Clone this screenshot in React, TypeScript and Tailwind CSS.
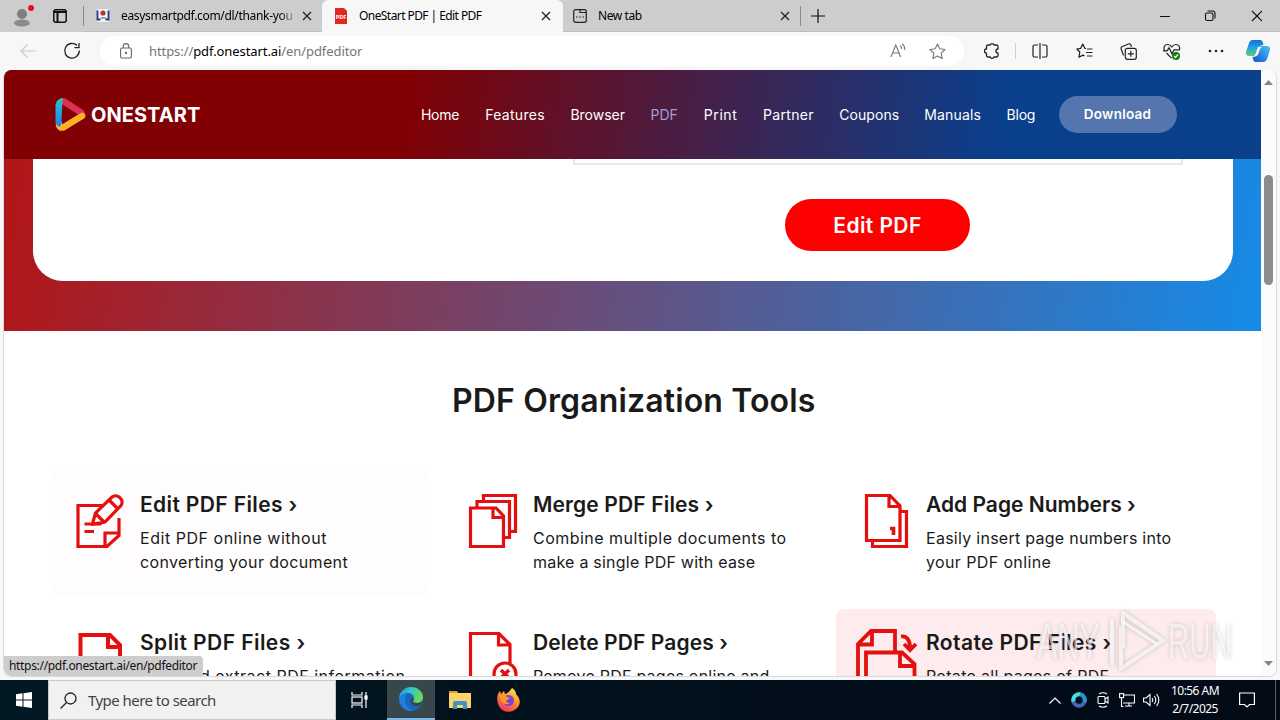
import React from 'react';
import type { ReactNode } from 'react';

const navLinks = [
  { label: 'Home', style: 'w-[39px] tracking-[-0.3px]' },
  { label: 'Features', style: 'w-[60px] tracking-[0.3px]' },
  { label: 'Browser', style: 'w-[55px]' },
  { label: 'PDF', style: 'w-[28px] text-[#a79bd6]' },
  { label: 'Print', style: 'w-[34px] tracking-[0.6px]' },
  { label: 'Partner', style: 'w-[51px] tracking-[0.35px]' },
  { label: 'Coupons', style: 'w-[60px] tracking-[0.1px]' },
  { label: 'Manuals', style: 'w-[57px] tracking-[0.15px]' },
  { label: 'Blog', style: 'w-[29px] tracking-[-0.2px]' },
];

function CloseIcon() {
  return (
    <svg width="10" height="10" viewBox="0 0 10 10" stroke="#222" strokeWidth="1.3">
      <path d="M1 1l8 8M9 1l-8 8" />
    </svg>
  );
}

function TabBar() {
  return (
    <div className="flex h-8 shrink-0 bg-[#cdcdcd] text-xs text-black">
      <div className="flex w-[83px] items-center">
        <svg className="ml-3" width="24" height="26" viewBox="0 0 24 26">
          <circle cx="10" cy="11" r="5" fill="#807d7a" />
          <ellipse cx="10" cy="20" rx="8" ry="3.5" fill="#8d8a87" />
          <circle cx="19" cy="5" r="3" fill="#e81123" />
        </svg>
        <svg className="ml-[17px]" width="14" height="14" viewBox="0 0 14 14" fill="none" stroke="#111" strokeWidth="1.5">
          <rect x="0.8" y="0.8" width="12.4" height="12.4" rx="2" />
          <path d="M1 3h12M4.5 3v10" strokeWidth="2" />
        </svg>
      </div>
      <div className="flex w-[239px] items-center border-b border-[#bdbdbd]">
        <div className="h-5 w-px bg-[#8a8a8a]" />
        <svg className="ml-3" width="14" height="14" viewBox="0 0 14 14">
          <rect x="1" y="0" width="12" height="13" fill="#f4f4f8" />
          <path d="M1.500 1.500v9h3M12.500 1.500v9h-3" stroke="#263a86" strokeWidth="1.800" fill="none" />
          <circle cx="7" cy="4" r="2.6" fill="#b8352c" />
          <path d="M5 9h5" stroke="#555" />
        </svg>
        <div className="ml-[11px] w-[176px] bg-linear-to-r from-black from-88% to-[#cdcdcd] bg-clip-text tracking-[-0.32px] whitespace-nowrap text-transparent">
          easysmartpdf.com/dl/thank-you
        </div>
        <div className="ml-[5px]">
          <CloseIcon />
        </div>
      </div>
      <div className="flex w-[241px] items-center rounded-t-md bg-[#f7f7f7]">
        <svg className="ml-3" width="14" height="16" viewBox="0 0 14 16">
          <path d="M1 0h9l3 3v13H1z" fill="#e5261f" />
          <text x="7" y="10.5" textAnchor="middle" fontSize="5.5" fontWeight="bold" fill="#fff">PDF</text>
        </svg>
        <div className="ml-[11px] w-[182px] tracking-[-0.57px] whitespace-nowrap">OneStart PDF | Edit PDF</div>
        <CloseIcon />
      </div>
      <div className="flex w-[238px] items-center border-b border-[#bdbdbd]">
        <svg className="ml-[10px]" width="14" height="14" viewBox="0 0 14 14" fill="none" stroke="#222" strokeWidth="1.2">
          <rect x="0.7" y="0.7" width="12.6" height="12.6" rx="2" />
          <path d="M7 1v2.5h6M3 8h1.5M6.2 8h1.5M9.5 8H11" />
        </svg>
        <div className="ml-[11px] w-[182px] tracking-[-0.4px]">New tab</div>
        <CloseIcon />
        <div className="ml-auto h-5 w-px bg-[#8a8a8a]" />
      </div>
      <div className="flex flex-1 items-center border-b border-[#bdbdbd]">
        <svg className="ml-[10px]" width="14" height="14" viewBox="0 0 14 14" stroke="#111" strokeWidth="1.2">
          <path d="M7 0v14M0 7h14" />
        </svg>
        <svg className="mr-[18px] ml-auto" width="104" height="12" viewBox="0 0 104 12" fill="none" stroke="#111" strokeWidth="1.1">
          <path d="M2 6.5h10M94 1l10 10M104 1L94 11" />
          <rect x="47.5" y="3" width="7.5" height="7.5" rx="1.5" />
          <path d="M49.5 1h5a2.5 2.5 0 0 1 2.5 2.5v5" />
        </svg>
      </div>
    </div>
  );
}

function Toolbar() {
  return (
    <div className="flex h-[38px] shrink-0 items-center bg-[#f7f7f7]">
      <svg className="ml-5" width="17" height="16" viewBox="0 0 17 16" fill="none" stroke="#ccc" strokeWidth="1.2">
        <path d="M16 8H1M7.5 1.5L1 8l6.5 6.5" />
      </svg>
      <svg className="ml-[26px]" width="18" height="18" viewBox="0 0 18 18" fill="none" stroke="#222" strokeWidth="1.3">
        <path d="M16.3 8.5a7.3 7.3 0 1 1-2.2-5M16 1v4.6h-4.6" />
      </svg>
      <div className="ml-[19px] flex h-[30px] w-[864px] items-center rounded-full bg-white">
        <svg className="ml-5" width="12" height="16" viewBox="0 0 12 16" fill="none" stroke="#666" strokeWidth="1.1">
          <rect x="0.6" y="5" width="10.8" height="10" rx="1.5" />
          <path d="M3.3 5V3.3a2.7 2.7 0 0 1 5.4 0V5" />
          <circle cx="6" cy="10" r="0.6" fill="#666" />
        </svg>
        <div className="mt-px ml-[17px] text-[13px] tracking-[-0.08px] text-[#757575]">
          https://<span className="text-black">pdf.onestart.ai</span>/en/pdfeditor
        </div>
        <svg className="ml-auto" width="16" height="16" viewBox="0 0 16 16" fill="none" stroke="#777" strokeWidth="1.1">
          <path d="M1 14L5.8 2l4.8 12M2.7 10h6.2M10 2.5c1.2.8 1.700 2 1.600 3.500M12 .8c2 1.400 2.900 3.600 2.700 6.200" />
        </svg>
        <svg className="mr-[18px] ml-[23px]" width="17" height="17" viewBox="0 0 17 17" fill="none" stroke="#777" strokeWidth="1.1" strokeLinejoin="round">
          <path d="M8.5 1l2.3 4.8 5.2.7-3.8 3.7.9 5.3-4.6-2.5-4.6 2.5.9-5.3L1 6.5l5.2-.7z" />
        </svg>
      </div>
      <svg className="ml-5" width="16" height="18" viewBox="0 0 16 18" fill="none" stroke="#222" strokeWidth="1.300" strokeLinejoin="round">
        <path d="M4 3h2.200a2 2 0 0 1 3.800 0h2.500A1.500 1.500 0 0 1 14 4.500V7a2.100 2.100 0 1 0 0 4.200v2.300a1.500 1.500 0 0 1-1.500 1.500H10a2 2 0 0 1-3.800 0H4a1.500 1.500 0 0 1-1.500-1.500v-2.300a2.100 2.100 0 0 1 0-4.200V4.500A1.500 1.500 0 0 1 4 3z" />
      </svg>
      <div className="ml-[15px] h-4 w-px bg-[#d0d0d0]" />
      <svg className="ml-4" width="16" height="16" viewBox="0 0 16 16" fill="none" stroke="#222" strokeWidth="1.2">
        <path d="M6 2H2.5A1.5 1.5 0 0 0 1 3.500v9A1.500 1.500 0 0 0 2.500 14H6M8 0v16M10 2h3.500A1.500 1.500 0 0 1 15 3.500v9a1.500 1.500 0 0 1-1.500 1.500H10" />
      </svg>
      <svg className="ml-[28px]" width="17" height="16" viewBox="0 0 17 16" fill="none" stroke="#222" strokeWidth="1.2" strokeLinejoin="round">
        <path d="M10 5.500L8.800 5.300 6.800 1 4.700 5.300.8 6l3 3-.9 5.300 4-2.200 1.500.8M11 6h5.500M10 9.500h6.500M11 13h5.500" />
      </svg>
      <svg className="ml-[27px]" width="17" height="17" viewBox="0 0 17 17" fill="none" stroke="#222" strokeWidth="1.2">
        <rect x="5.300" y="5.300" width="11" height="11" rx="2" />
        <path d="M3.500 12.500L1.200 6a2 2 0 0 1 1.200-2.500l6-2.500a2 2 0 0 1 2.600 1.200l.5 1.500M10.800 7.800v6M7.800 10.800h6" />
      </svg>
      <svg className="ml-[26px]" width="18" height="17" viewBox="0 0 18 17" fill="none" stroke="#222" strokeWidth="1.2">
        <path d="M1.500 7.500C0 4 2 1.500 4.500 1.500c2 0 3.500 1.300 4.300 2.500C9.600 2.800 11 1.500 13 1.500c2.600 0 4.500 2.500 3.300 5.500M3.500 10l5 5.200M0 7.800h4l2-3 3 6 2-4h5.500" />
        <circle cx="13" cy="13" r="4" fill="#107c10" stroke="none" />
        <path d="M11 13l1.500 1.500 2.500-3" stroke="#fff" />
      </svg>
      <svg className="ml-[27px]" width="16" height="4" viewBox="0 0 16 4" fill="#222">
        <circle cx="2" cy="2" r="1.300" />
        <circle cx="8" cy="2" r="1.300" />
        <circle cx="14" cy="2" r="1.300" />
      </svg>
      <svg className="ml-[22px]" width="24" height="22" viewBox="0 0 24 22">
        <defs>
          <linearGradient id="copA" x1="0" y1="0" x2="0" y2="1">
            <stop offset="0" stopColor="#1570dc" />
            <stop offset="0.500" stopColor="#22a8df" />
            <stop offset="1" stopColor="#5fcf71" />
          </linearGradient>
          <linearGradient id="copB" x1="1" y1="0" x2="0" y2="1">
            <stop offset="0" stopColor="#47c3f5" />
            <stop offset="1" stopColor="#1454d4" />
          </linearGradient>
        </defs>
        <path d="M7 0h7c2 0 2.500 1 3 3l.5 2c-3 0-4 1-5 4l-1.500 5c-.5 1.500-1.500 2-3 2H3c-2 0-3.500-1.500-3-4L3 3c.6-2 2-3 4-3z" fill="url(#copA)" />
        <path d="M17 22h-7c-2 0-2.500-1-3-3l-.5-2c3 0 4-1 5-4L13 8c.5-1.500 1.500-2 3-2h5c2 0 3.500 1.500 3 4l-3 9c-.6 2-2 3-4 3z" fill="url(#copB)" />
        <path d="M12 7h4c-2 1-2.500 3-3.500 6-.5 1.500-1 2.500-2.500 3H7.500c2-.5 2.500-3 3-5z" fill="#fff" />
      </svg>
    </div>
  );
}

function SiteHeader() {
  return (
    <div className="flex h-[89px] items-center bg-[linear-gradient(98deg,#800004_32%,#0a3f8c_79%)] text-white">
      <svg className="ml-[50px]" width="32" height="36" viewBox="0 0 32 36" fill="none" strokeWidth="6.500" strokeLinecap="round" strokeLinejoin="round">
        <defs>
          <linearGradient id="logoBlue" x1="0" y1="0" x2="0" y2="1">
            <stop offset="0" stopColor="#32c3c4" />
            <stop offset="1" stopColor="#1684f2" />
          </linearGradient>
        </defs>
        <path d="M10 4.500L27 15.500c2 1.500 1.500 3 0 4" stroke="#dc3152" />
        <path d="M28 19L10 30c-3 1.500-5 0-5-3" stroke="#fcb02b" />
        <path d="M7.500 1.200C9 .8 9.500 2 8.500 4L7.500 25c0 3-1 4-2 4.500-2.500-1-4-2.500-4-5.500V9c0-4 2.500-7 6-7.800z" fill="url(#logoBlue)" />
      </svg>
      <div className="ml-[5px] w-[110px] text-[20px] leading-none font-bold tracking-[0.05px]">ONESTART</div>
      <div className="ml-[220px] flex gap-[25.2px] text-sm">
        {navLinks.map((link) => (
          <div key={link.label} className={`whitespace-nowrap ${link.style}`}>
            {link.label}
          </div>
        ))}
      </div>
      <div className="ml-[23px] flex h-[37px] w-[118px] items-center justify-center rounded-full bg-[#5575ae] text-[13.500px] font-semibold tracking-[0.25px]">
        Download
      </div>
    </div>
  );
}

function Hero() {
  return (
    <div className="h-[172px] bg-[linear-gradient(100deg,#b31516,#158be8)] pr-7 pl-[29px]">
      <div className="h-[122px] rounded-b-[30px] bg-white">
        <div className="ml-[540px] h-[6px] w-[610px] border-2 border-t-0 border-[#e1eaf1]" />
        <div className="mt-[34px] ml-[752px] flex h-[52px] w-[185px] items-center justify-center rounded-[26px] bg-[#ff0000] pt-px text-[21px] font-semibold tracking-[0.4px] text-white">
          Edit PDF
        </div>
      </div>
    </div>
  );
}

function ToolIcon({ children }: { children: ReactNode }) {
  return (
    <svg className="shrink-0 overflow-visible" width="48" height="54" viewBox="0 0 48 54" fill="none" stroke="#e3100f" strokeWidth="3.200">
      {children}
    </svg>
  );
}

const tools = [
  {
    title: 'Edit PDF Files ›',
    titleStyle: 'tracking-[0.37px]',
    lines: [
      { text: 'Edit PDF online without', style: 'tracking-[0.53px]' },
      { text: 'converting your document', style: 'tracking-[0.36px]' },
    ],
    card: 'bg-[#fffcfd]',
    icon: (
      <ToolIcon>
        <path d="M26 11.500H2v41h29l12-11V24M29 52V39h14M8.500 37.500H18M8.500 30h17" />
        <path d="M17 28l2.500-9L36 3c5-4 13 3 9 8.500L29 28l-12 2zM19 19l9 9M33 6l9 9" />
      </ToolIcon>
    ),
  },
  {
    title: 'Merge PDF Files ›',
    titleStyle: 'tracking-[0.14px]',
    lines: [
      { text: 'Combine multiple documents to', style: 'tracking-[0.47px]' },
      { text: 'make a single PDF with ease', style: 'tracking-[0.23px]' },
    ],
    card: '',
    icon: (
      <ToolIcon>
        <path d="M1.500 14H27l7.500 8v30.500h-33zM24 14v9.500h10M8 14V7.500h32.500v36H34M14.500 7V1.500h32v36H41" />
      </ToolIcon>
    ),
  },
  {
    title: 'Add Page Numbers ›',
    titleStyle: '',
    lines: [
      { text: 'Easily insert page numbers into', style: 'tracking-[0.27px]' },
      { text: 'your PDF online', style: 'tracking-[0.38px]' },
    ],
    card: '',
    icon: (
      <ToolIcon>
        <path d="M4.500 1.500H28l10 10.500v34.500H4.500zM27 2v10.500h11M10.500 47v5.500h34v-35H38" />
        <path d="M28 34.500h3.500V41" strokeWidth="3.600" />
      </ToolIcon>
    ),
  },
  {
    title: 'Split PDF Files ›',
    titleStyle: 'tracking-[0.44px]',
    lines: [{ text: 'Split and extract PDF information', style: 'tracking-[0.5px]' }],
    card: '',
    icon: (
      <ToolIcon>
        <path d="M4.500 40V3H34l10 10v27M32 4v11h12" strokeWidth="4" />
      </ToolIcon>
    ),
  },
  {
    title: 'Delete PDF Pages ›',
    titleStyle: 'tracking-[0.1px]',
    lines: [{ text: 'Remove PDF pages online and', style: 'tracking-[0.23px]' }],
    card: '',
    icon: (
      <ToolIcon>
        <path d="M1.500 50V1.500H30l11 11V31M29.500 2v11H41" />
        <circle cx="36" cy="42" r="11" />
        <path d="M32 38l8 8M40 38l-8 8" strokeWidth="3.500" />
      </ToolIcon>
    ),
  },
  {
    title: 'Rotate PDF Files ›',
    titleStyle: 'tracking-[0.4px]',
    lines: [{ text: 'Rotate all pages of PDF', style: 'tracking-[0.3px]' }],
    card: 'bg-[#fdebed]',
    icon: (
      <ToolIcon>
        <path d="M-4 50V12L9-1h24V20M-4 12.500H10V0M4 50V20.500h36L52.500 32v18M38 21v13h14M39 4.500c6-1 9 4 9 11M42 12l6 6 6-6" strokeWidth="3.800" />
      </ToolIcon>
    ),
  },
];

function Tools() {
  return (
    <div className="bg-white pl-[46px]">
      <div className="ml-[402px] h-[140px] w-[380px] pt-[50px] text-[32px] leading-[40px] font-semibold tracking-[0.14px] whitespace-nowrap text-[#1a1a1a]">
        PDF Organization Tools
      </div>
      <div className="grid grid-cols-[380px_380px_380px] gap-x-[13px] gap-y-[14px]">
        {tools.map((tool) => (
          <div key={tool.title} className={`flex h-[124px] gap-4 rounded-lg pt-[23px] pl-[26px] text-[#1a1a1a] ${tool.card}`}>
            {tool.icon}
            <div className="-mt-[3px] whitespace-nowrap">
              <div className={`text-[21px] leading-7 font-semibold ${tool.titleStyle}`}>{tool.title}</div>
              <div className="mt-[7px] text-base leading-6">
                {tool.lines.map((line) => (
                  <div key={line.text} className={line.style}>
                    {line.text}
                  </div>
                ))}
              </div>
            </div>
          </div>
        ))}
      </div>
    </div>
  );
}

function Scrollbar() {
  return (
    <div className="flex h-full w-[15px] flex-col items-center bg-[#fbfbfb]">
      <svg className="mt-[10px]" width="9" height="5" viewBox="0 0 9 5" fill="#858585">
        <path d="M0 5L4.500 0 9 5z" />
      </svg>
      <div className="mt-[90px] h-[110px] w-[9px] rounded-full bg-[#8b8b8b]" />
      <svg className="mt-auto mb-[10px]" width="9" height="5" viewBox="0 0 9 5" fill="#858585">
        <path d="M0 0l4.500 5L9 0z" />
      </svg>
    </div>
  );
}

function Watermark() {
  return (
    <svg
      className="absolute top-[536px] left-[1032px] drop-shadow-[0_0_2px_rgba(90,90,90,0.45)]"
      width="206"
      height="70"
      viewBox="0 0 206 70"
      fill="#fff"
      fillOpacity="0.6"
      fontFamily="Liberation Sans"
      fontSize="50"
    >
      <text x="5" y="53" textLength="63" lengthAdjust="spacingAndGlyphs">ANY</text>
      <text x="136" y="53" textLength="64" lengthAdjust="spacingAndGlyphs">RUN</text>
      <g fill="none" stroke="#fff" strokeOpacity="0.7" strokeLinejoin="round">
        <path d="M91 42V7l40 27.500-42 28V20" strokeWidth="4" />
        <path d="M91 16l34 22" strokeWidth="3" />
        <path d="M80 13v46" strokeWidth="4" />
      </g>
    </svg>
  );
}

function StatusBubble() {
  return (
    <div className="absolute top-[586px] left-1 flex h-5 w-[199px] items-center rounded-tr rounded-bl-lg bg-[#cdcdcd] pl-[5px] text-xs tracking-[-0.32px] whitespace-nowrap text-[#111]">
      https://pdf.onestart.ai/en/pdfeditor
    </div>
  );
}

function Taskbar() {
  return (
    <div className="flex h-10 shrink-0 items-center bg-linear-to-r from-[#021822] to-[#020a16] text-white">
      <div className="flex w-12 justify-center">
        <svg width="16" height="16" viewBox="0 0 16 16" fill="#fff">
          <path d="M0 2.200L6.500 1.300v6.200H0zM7.500 1.200L16 0v7.500H7.500zM0 8.500h6.500v6.200L0 13.800zM7.500 8.500H16V16l-8.500-1.200z" />
        </svg>
      </div>
      <div className="flex h-full w-[288px] items-center border border-[#c8c8c8] bg-[#f1f1f1] text-[15px] text-[#444]">
        <svg className="ml-[11px]" width="17" height="17" viewBox="0 0 17 17" fill="none" stroke="#222" strokeWidth="1.300">
          <circle cx="10.500" cy="6.500" r="5.500" />
          <path d="M6.500 10.500L.500 16.500" />
        </svg>
        <div className="ml-[11px] tracking-[-0.54px]">Type here to search</div>
      </div>
      <div className="flex w-[51px] justify-center">
        <svg className="-ml-1" width="17" height="16" viewBox="0 0 17 16" fill="none" stroke="#fff" strokeWidth="1.200">
          <path d="M1 0v3h10V0M1 16v-3h10v3M15 0v16" />
          <rect x="1" y="5" width="10" height="6" />
          <rect x="14" y="4" width="2" height="3" fill="#fff" />
        </svg>
      </div>
      <div className="flex h-full w-12 items-center justify-center border-b-2 border-[#76b9ed] bg-[#37474c]">
        <svg width="24" height="24" viewBox="0 0 24 24">
          <defs>
            <linearGradient id="edgeTop" x1="0" y1="0" x2="1" y2="0.300">
              <stop offset="0" stopColor="#1d9ae0" />
              <stop offset="0.500" stopColor="#35c1d0" />
              <stop offset="1" stopColor="#67dc55" />
            </linearGradient>
          </defs>
          <circle cx="12" cy="12" r="12" fill="#1768bd" />
          <path d="M0 11C1 4 6 0 12 0c7 0 12 5 12 10 0 4-3 6-6 6-3 0-4-1-4-2s1-1 1-3c0-3-3-5-6-5-4 0-7 2-9 5z" fill="url(#edgeTop)" />
          <path d="M0 11c2-3 5-5 9-5-4 3-4 9-1 13 2 3 5 4 6 5C7 25 0 20 0 11z" fill="#1c80da" />
          <path d="M14 14c0 1 1 2 4 2 2 0 4-.7 5.500-2-.5 2-1.500 4-3 5-4 1-9-1-9-5 0-2 1-3.500 3.500-3 .1 1.500-1 2-1 3z" fill="#37474c" />
        </svg>
      </div>
      <div className="ml-[14px] flex items-center">
        <svg width="22" height="20" viewBox="0 0 22 20">
          <path d="M0 1h8l2 3h-10z" fill="#e49b23" />
          <path d="M0 3h22v15H0z" fill="#fbd569" />
          <path d="M4 19v-6q0-2 2-2h10q2 0 2 2v6h-4v-4H8v4z" fill="#3f93cb" />
        </svg>
        <svg className="ml-[26px]" width="23" height="24" viewBox="0 0 23 24">
          <defs>
            <linearGradient id="fox" x1="0.800" y1="0" x2="0.300" y2="1">
              <stop offset="0" stopColor="#fff04a" />
              <stop offset="0.450" stopColor="#ff9428" />
              <stop offset="1" stopColor="#f2305c" />
            </linearGradient>
          </defs>
          <path d="M15 0c3 2 4 4 4 6 4 4 5 9 2 13-5 7-16 6-19-1C-1 12 0 6 3 3l1 3 3-3 1 3c3-1 5-3 7-6z" fill="url(#fox)" />
          <circle cx="11.500" cy="12.500" r="5.500" fill="#8142d8" />
          <path d="M3 7c3-1 5 0 7 2l3 1-3 2c-2 1 0 3 3 3-3 2-8 1-9-3z" fill="#ff982b" />
        </svg>
      </div>
      <div className="ml-auto flex items-center">
        <svg width="12" height="7" viewBox="0 0 12 7" fill="none" stroke="#fff" strokeWidth="1.200">
          <path d="M.500 6.500L6 1l5.500 5.500" />
        </svg>
        <svg className="ml-[10px]" width="16" height="16" viewBox="0 0 16 16" fill="none" strokeWidth="4">
          <circle cx="8" cy="8" r="5.800" stroke="#4266b5" />
          <path d="M2.500 9.500A5.800 5.800 0 0 1 9 2.300" stroke="#49d9d7" />
          <path d="M9 2.300a5.800 5.800 0 0 1 4.500 7.500" stroke="#2696cf" />
        </svg>
        <svg className="ml-[10px]" width="12" height="16" viewBox="0 0 12 16" fill="none" stroke="#fff" strokeWidth="1.100">
          <path d="M2 2q4-2.500 8 0M2 14q4 2.500 8 0M8 7l3-2v6l-3-2" />
          <rect x="1" y="4.500" width="7" height="7" rx="1" />
        </svg>
        <svg className="ml-[10px]" width="16" height="14" viewBox="0 0 16 14" fill="none" stroke="#fff" strokeWidth="1.100">
          <path d="M5 2h10.500v8H4M10 10v3M6 13h7M2.500 5v8.500h2" />
          <rect x="0.600" y="0.600" width="4" height="4" />
        </svg>
        <svg className="ml-2" width="17" height="14" viewBox="0 0 17 14" fill="none" stroke="#fff" strokeWidth="1.100">
          <path d="M.600 5h2.500L7 1.500v11L3.100 9H.600zM9 5q1.500 2 0 4M11.300 3q3 4 0 8M13.600 1q4.500 6 0 12" />
        </svg>
        <div className="ml-[9px] w-[52px] text-center text-xs leading-[18px] tracking-[-0.55px] whitespace-nowrap">
          <div>10:56 AM</div>
          <div>2/7/2025</div>
        </div>
        <svg className="ml-[18px]" width="16" height="16" viewBox="0 0 16 16" fill="none" stroke="#fff" strokeWidth="1.200">
          <path d="M.600 1h14.800v11.500H10.500L8 15l-2.500-2.500H.600z" />
        </svg>
        <div className="mr-1 ml-5 h-10 w-px bg-[#56616b]" />
      </div>
    </div>
  );
}

function App() {
  return (
    <div className="flex h-[720px] w-[1280px] flex-col overflow-hidden bg-[#f7f7f7] font-['Noto_Sans',sans-serif]">
      <TabBar />
      <Toolbar />
      <div className="relative h-[610px] shrink-0 pl-[3px]">
        <div className="flex h-[607px] w-[1274px] overflow-hidden rounded-lg border border-t-0 border-[#d9dcde] bg-white">
          <div className="h-full w-[1257px] overflow-hidden font-[Inter,sans-serif]">
            <SiteHeader />
            <Hero />
            <Tools />
          </div>
          <Scrollbar />
        </div>
        <Watermark />
        <StatusBubble />
      </div>
      <Taskbar />
    </div>
  );
}

export default App;
